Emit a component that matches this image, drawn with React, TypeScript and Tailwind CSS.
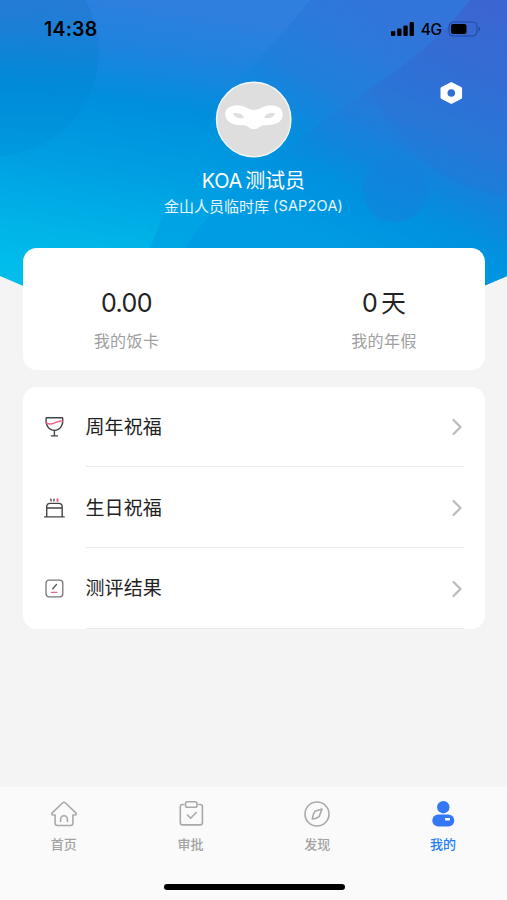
import { ReactNode } from "react";
import { ChevronRight } from "lucide-react";

interface MenuEntry {
  id: string;
  label: string;
  icon: ReactNode;
}

interface Tab {
  id: string;
  label: string;
  icon: ReactNode;
}

const stats = [
  { id: "meal", value: "0.00", unit: "", label: "我的饭卡" },
  { id: "leave", value: "0", unit: "天", label: "我的年假" },
];

const menu: MenuEntry[] = [
  {
    id: "anniversary",
    label: "周年祝福",
    icon: (
      <svg className="w-6 h-6" viewBox="0 0 24 24" fill="none" strokeWidth="1.4" strokeLinecap="round" strokeLinejoin="round">
        <path d="M4.300 2.700h16.200c1.300 7-2.300 12.700-8.100 12.700S3 9.700 4.300 2.700Z" stroke="#444" />
        <path d="M4.200 7.800c3 1.800 5.700 1.300 8 .3 2.500-1.100 4.700-2.400 8.200-2" stroke="#ee6688" />
        <path d="M12.400 15.400v5.300M9.400 20.900h6" stroke="#444" />
      </svg>
    ),
  },
  {
    id: "birthday",
    label: "生日祝福",
    icon: (
      <svg className="w-6 h-6" viewBox="0 0 24 24" fill="none" strokeWidth="1.4" strokeLinecap="round" strokeLinejoin="round">
        <path d="M2.600 20.900h19.500M4.700 20.500V11c0-2.200 1.300-3.600 3.500-3.600h8.500c2.200 0 3.500 1.400 3.500 3.600v9.500M4.700 12h15.500" stroke="#444" />
        <path d="M8.800 3.300l.4 1.600M12 3.300v1.600" stroke="#444" />
        <path d="M15.500 3.300v1.600" stroke="#ee6688" strokeWidth="2" />
      </svg>
    ),
  },
  {
    id: "review",
    label: "测评结果",
    icon: (
      <svg className="w-6 h-6" viewBox="0 0 24 24" fill="none" strokeWidth="1.3" strokeLinecap="round" strokeLinejoin="round">
        <rect x="4" y="4.200" width="16.800" height="16.600" rx="3" stroke="#777" />
        <path d="M10.700 12.700l3.800-4.200" stroke="#555" />
        <path d="M9.400 16.300h5.500" stroke="#ee6688" />
      </svg>
    ),
  },
];

const tabs: Tab[] = [
  {
    id: "home",
    label: "首页",
    icon: (
      <svg className="w-7 h-7" viewBox="0 0 28 28" fill="none" stroke="#a9a9a9" strokeWidth="1.6" strokeLinecap="round" strokeLinejoin="round">
        <path d="M14 2.300c-.6 0-1 .3-1.500.7L2.200 12.800c-.9.900-.4 2.200.8 2.200h2.100v8.300c0 1.300.9 2.200 2.200 2.200h13.400c1.300 0 2.200-.9 2.200-2.200V15H25c1.200 0 1.700-1.300.8-2.200L15.500 3c-.5-.4-.9-.7-1.500-.7Z" />
        <path d="M10.600 21.500v-2.300a3.400 3.400 0 0 1 6.800 0v2.300" />
      </svg>
    ),
  },
  {
    id: "approval",
    label: "审批",
    icon: (
      <svg className="w-7 h-7" viewBox="0 0 28 28" fill="none" stroke="#a9a9a9" strokeWidth="1.6" strokeLinecap="round" strokeLinejoin="round">
        <path d="M6.800 4.500H5.500c-1.300 0-2.200.9-2.200 2.200v16c0 1.300.9 2.200 2.200 2.200h17.700c1.300 0 2.200-.9 2.200-2.200v-16c0-1.300-.9-2.200-2.200-2.200h-1.300" />
        <rect x="8.500" y="1.800" width="11.500" height="5.500" rx="1.800" />
        <path d="M10.500 15l3.200 3.200 5.500-5.700" />
      </svg>
    ),
  },
  {
    id: "discover",
    label: "发现",
    icon: (
      <svg className="w-7 h-7" viewBox="0 0 28 28" fill="none" stroke="#a9a9a9" strokeWidth="1.6" strokeLinejoin="round">
        <circle cx="14" cy="14" r="12" />
        <path d="M19 9l-7 2.300c-1.700 2-2.300 4.500-2.700 7.700 3-.2 5-.9 6.800-2.300Z" />
      </svg>
    ),
  },
  {
    id: "mine",
    label: "我的",
    icon: (
      <svg className="w-7 h-7" viewBox="0 0 28 28" fill="#3478f8">
        <circle cx="14.300" cy="7.200" r="6.200" />
        <rect x="3.300" y="14.600" width="22" height="12" rx="6" />
        <rect x="16" y="18" width="5" height="2.500" rx=".7" fill="#fff" />
      </svg>
    ),
  },
];

function Backdrop() {
  return (
    <svg className="[grid-area:1/1] block w-[507px] h-[330px]" viewBox="0 0 507 330">
      <defs>
        <linearGradient id="sky" gradientUnits="userSpaceOnUse" x1="130" y1="0" x2="85" y2="280">
          <stop offset="0" stopColor="#2f7fde" />
          <stop offset=".18" stopColor="#1c84de" />
          <stop offset=".36" stopColor="#008fdd" />
          <stop offset=".6" stopColor="#009fe2" />
          <stop offset=".84" stopColor="#00b3e8" />
          <stop offset="1" stopColor="#00bdec" />
        </linearGradient>
        <linearGradient id="wave" gradientUnits="userSpaceOnUse" x1="490" y1="5" x2="382" y2="265">
          <stop offset="0" stopColor="#3f63d0" />
          <stop offset=".3" stopColor="#306fd5" />
          <stop offset=".5" stopColor="#257ad9" />
          <stop offset=".66" stopColor="#1084dc" />
          <stop offset=".8" stopColor="#0091df" />
          <stop offset="1" stopColor="#009be3" />
        </linearGradient>
        <linearGradient id="band" gradientUnits="userSpaceOnUse" x1="370" y1="0" x2="225" y2="230">
          <stop offset="0" stopColor="#3372d8" />
          <stop offset=".35" stopColor="#217edb" />
          <stop offset=".62" stopColor="#0090de" />
          <stop offset="1" stopColor="#00a2e3" />
        </linearGradient>
        <linearGradient id="orb" x1="0" y1="0" x2="0" y2="1">
          <stop offset="0" stopColor="#2377cc" />
          <stop offset=".3" stopColor="#2079cf" />
          <stop offset=".65" stopColor="#0087d4" />
          <stop offset="1" stopColor="#0096dc" />
        </linearGradient>
        <clipPath id="hero">
          <path d="M0 0H507V276Q253 390 0 276Z" />
        </clipPath>
      </defs>
      <g clipPath="url(#hero)">
        <path fill="url(#sky)" d="M0 0h507v330H0z" />
        <path fill="url(#band)" d="M310 0C275 45 240 72 218 110C190 160 170 190 150 250L130 330H507V0Z" opacity=".8" />
        <path fill="url(#wave)" d="M470 0C430 55 365 90 318 125C260 168 215 200 185 248L150 330H507V0Z" opacity=".85" />
        <path fill="#3569d2" d="M400 140C440 180 470 192 507 196V0H470C430 55 400 72 370 90Z" opacity=".15" />
        <circle cx="-5" cy="52" r="104" fill="url(#orb)" opacity=".6" />
        <circle cx="395" cy="190" r="32" fill="#157fdb" opacity=".5" />
      </g>
    </svg>
  );
}

function StatusBar() {
  return (
    <div className="h-14 pt-[3px] pl-11 pr-[26px] flex items-center justify-between text-black">
      <span className="text-[19.500px] font-semibold tracking-[0.2px]">14:38</span>
      <div className="flex items-center">
        <svg className="w-6 h-4 -mt-[2px]" viewBox="0 0 24 16">
          <rect x="0" y="10" width="4.300" height="5" rx="1" />
          <rect x="6.200" y="7.500" width="4.300" height="7.500" rx="1" />
          <rect x="12.400" y="4.500" width="4.300" height="10.500" rx="1" />
          <rect x="18.600" y="1" width="4.300" height="14" rx="1" />
        </svg>
        <span className="ml-[6px] text-[15.500px] font-medium tracking-[-0.2px]">4G</span>
        <svg className="ml-[6px] -mt-[2px] w-[33px] h-4" viewBox="0 0 33 16">
          <rect x="1" y="1" width="28" height="14" rx="4" fill="none" stroke="#0b2a70" strokeOpacity=".5" />
          <rect x="3" y="3" width="15.500" height="10" rx="2" />
          <path d="M30.500 5.500c2 .7 2 4.300 0 5z" fill="#0b2a70" opacity=".5" />
        </svg>
      </div>
    </div>
  );
}

function Profile() {
  return (
    <div className="h-[192px] px-11 grid grid-cols-[1fr_auto_1fr] text-white">
      <div />
      <div className="flex flex-col items-center">
        <svg className="mt-[25px] ml-px w-[77px] h-[77px]" viewBox="0 0 77 77">
          <circle cx="38.700" cy="38.500" r="37.200" fill="#dedede" stroke="#f3f7fb" strokeWidth="1.400" />
          <path
            fill="#fff"
            fillRule="evenodd"
            d="M22.500 24.300c7 0 11 4.800 16.500 4.800s9.500-4.800 16.500-4.800c7.500 0 12.300 3.700 12.300 9 0 7.200-7 11-16.300 11-4 0-5.500.6-7.500 2.300-2.800 2-7.200 2-10 0-2-1.700-3.500-2.300-7.500-2.300-9.300 0-16.300-3.800-16.300-11 0-5.300 4.800-9 12.300-9ZM18 32.500c4.500-1.200 9.300.5 11 4-4.500 1.700-9.300.3-11-4ZM60 32.500c-4.500-1.200-9.300.5-11 4 4.500 1.700 9.300.3 11-4Z"
          />
        </svg>
        <div className="mt-[8px] h-[29px] flex items-center text-[20px] leading-none">
          <span className="tracking-[-0.3px]">KOA</span>
          <span className="ml-[3px]">测试员</span>
        </div>
        <div className="-mt-px h-[24px] flex items-center text-[15px] leading-none text-white/90">
          <span>金山人员临时库</span>
          <span className="ml-[4px] text-[14.500px] tracking-[0.2px]">(SAP2OA)</span>
        </div>
      </div>
      <button className="justify-self-end self-start mt-[25px]">
        <svg className="w-6 h-6" viewBox="0 0 24 24">
          <path d="M12.300 1.500 22.600 6.800V17.200L12.300 22.500 2 17.200V6.800Z" fill="#fff" stroke="#fff" strokeLinejoin="round" />
          <circle cx="12.300" cy="12" r="3.800" fill="#2f70d4" />
        </svg>
      </button>
    </div>
  );
}

export default function App() {
  return (
    <div className="w-[507px] h-[900px] overflow-hidden flex flex-col bg-[#f4f4f4] font-[Inter,'Noto_Sans_CJK_SC',sans-serif]">
      <div className="h-[787px] grid grid-cols-1 grid-rows-1 content-start">
        <Backdrop />
        <div className="[grid-area:1/1] z-10 flex flex-col">
          <StatusBar />
          <Profile />

          {/* Balance card */}
          <div className="mx-[22.5px] h-[121.500px] rounded-[14px] bg-white grid grid-cols-2">
            {stats.map((stat) => (
              <div
                key={stat.id}
                className={`flex flex-col items-center ${stat.id === "meal" ? "pr-[23px]" : "pl-[30px]"}`}
              >
                <div className="mt-[39px] h-8 flex items-center text-[25px] leading-none text-[#222]">
                  <span className="tracking-[-0.6px]">{stat.value}</span>
                  {stat.unit && <span className="ml-[4px]">{stat.unit}</span>}
                </div>
                <span className="mt-[10px] text-[16px] leading-6 tracking-[0.4px] text-[#a0a0a0]">{stat.label}</span>
              </div>
            ))}
          </div>

          {/* Menu */}
          <div className="mt-[17.500px] mx-[22.5px] h-[242px] rounded-[14px] bg-white flex flex-col">
            {menu.map((entry) => (
              <button key={entry.id} className="h-[81px] pl-[20px] pr-[21px] flex items-center text-left">
                <span className="-ml-px -mt-px mr-px">{entry.icon}</span>
                <div className="ml-[19px] h-[81px] -mt-px flex-1 flex items-center justify-between border-b border-[#ececec]">
                  <span className="pt-[4px] text-[19px] tracking-[0.1px] text-[#222]">{entry.label}</span>
                  <ChevronRight className="w-7 h-7 mt-[2px] -mr-[7px] text-[#bdbdbd]" strokeWidth={2} />
                </div>
              </button>
            ))}
          </div>
        </div>
      </div>

      {/* Tab bar */}
      <div className="h-[113px] bg-[#fafafa] flex flex-col items-center">
        <div className="w-full h-[96px] pt-[13px] grid grid-cols-4">
          {tabs.map((tab) => (
            <button
              key={tab.id}
              className={`flex flex-col items-center self-start ${tab.id === "mine" ? "pr-px" : "pl-px"}`}
            >
              {tab.icon}
              <span
                className={`mt-[6px] text-[13px] leading-5 font-medium ${tab.id === "mine" ? "text-[#1f7df5]" : "text-[#a3a3a3]"}`}
              >
                {tab.label}
              </span>
            </button>
          ))}
        </div>
        <div className="mt-px ml-px w-[181px] h-[6px] rounded-full bg-black" />
      </div>
    </div>
  );
}
